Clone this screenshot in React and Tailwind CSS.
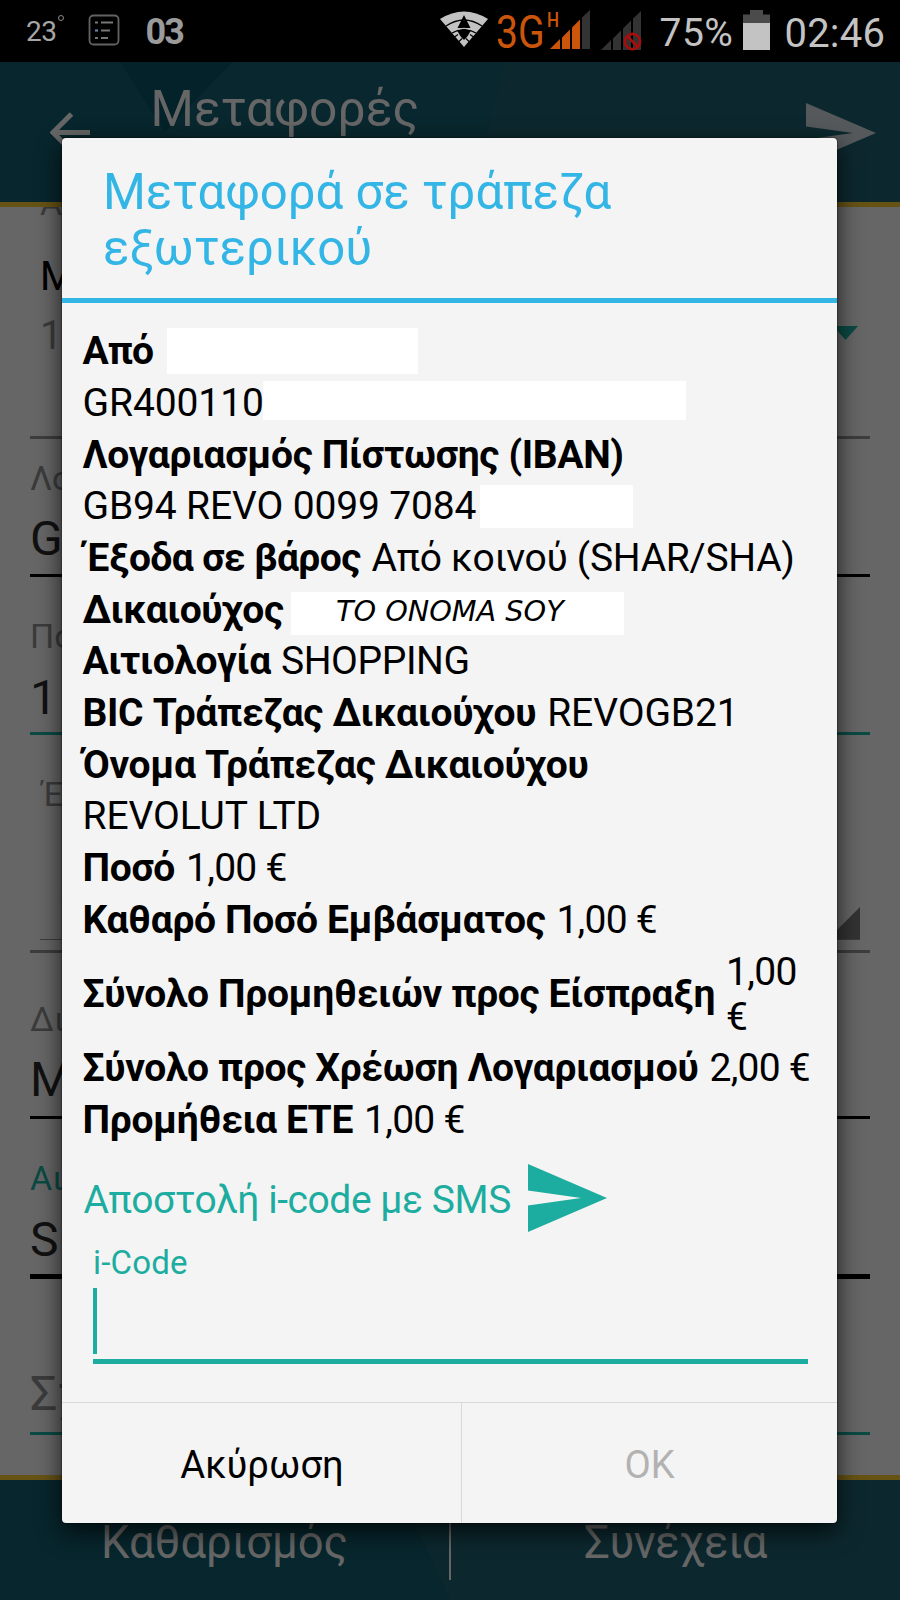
const WifiIcon = () => (
  <svg width="50" height="38" viewBox="0 0 50 38" className="ml-[439px]">
    <path d="M25 37 L1 9 Q25 -6 49 9 Z" fill="#c3c3c3" />
    <path d="M7 16 Q25 4 43 16 M13 23 Q25 16 37 23" fill="none" stroke="#000" strokeWidth="1.4" />
    <path d="M25 5 L31.5 18 H18.5 Z" fill="#000" />
    <path d="M18 20.5 Q25 18.5 32 20.5 L28 27 L25 30 L22 27 Z" fill="#000" />
    <path d="M17 19.5 Q25 17 33 19.5" fill="none" stroke="#c3c3c3" strokeWidth="1" />
    <path d="M14 28 L19 24.5 M18.5 33 L23 28.5 M36 28 L31 24.5 M31.5 33 L27 28.5" stroke="#000" strokeWidth="1.2" />
  </svg>
);

const SignalBars = ({ active, blocked }) => (
  <svg width="41" height="41" viewBox="0 0 41 41">
    <path d="M0 39 L10 29 V39 Z" fill={active ? '#cb560b' : '#333'} />
    <path d="M12 39 V27.5 L20 19.5 V39 Z" fill={active ? '#cb560b' : '#333'} />
    <path d="M22 39 V17.5 L30 9.5 V39 Z" fill={active ? '#cb560b' : '#333'} />
    <path d="M32 39 V7.5 L40 0 V39 Z" fill="#333" />
    {blocked && (
      <g fill="none" stroke="#a80c0c" strokeWidth="2.6">
        <circle cx="31.5" cy="30.5" r="7.6" />
        <path d="M26 25 L37 36" />
      </g>
    )}
  </svg>
);

const SendIcon = ({ className }) => (
  <svg viewBox="0 0 79 68" preserveAspectRatio="none" className={className} fill="currentColor">
    <path d="M0 0 L79 34 L0 68 V41.5 L53 34 L0 26.5 Z" />
  </svg>
);

const StatusBar = () => (
  <div className="flex h-[62px] shrink-0 items-start bg-black text-[#c3c3c3]">
    <div className="flex w-0 items-start whitespace-nowrap text-[#a6a6a6]">
      <span className="ml-[26px] mt-[18px] text-[28px] leading-none tracking-[-0.5px]">23</span>
      <span className="ml-[2px] mt-[15px] h-[6px] w-[6px] shrink-0 rounded-full border border-[#8a8a8a]" />
      <svg width="32" height="32" viewBox="0 0 32 32" className="ml-[24px] mt-[14px] shrink-0" fill="none">
        <rect x="1.5" y="1.5" width="29" height="29" rx="4" stroke="#626262" strokeWidth="1.8" />
        <path d="M7 8.5 h3 M13 8.5 h12 M13 16.5 h9 M7 24 h3 M13 24 h7" stroke="#777" strokeWidth="2.2" />
        <path d="M7 16.5 h3" stroke="#6a7fa8" strokeWidth="2.2" />
      </svg>
      <span className="ml-[25px] mt-[14px] text-[36px] font-bold leading-none tracking-[-1.8px] text-[#9b9b9b]">03</span>
    </div>
    <div className="flex shrink-0 items-start pt-[10px]">
      <WifiIcon />
      <div className="w-[52px] pl-[7px] text-[#cb560b]">
        <div className="mt-[-1px] w-max origin-left scale-x-[0.85] text-[46px] leading-none">3G</div>
      </div>
      <div className="w-[9px] text-[#cb560b]">
        <div className="ml-[6px] w-max origin-left scale-x-[0.85] text-[20px] font-medium leading-none">H</div>
      </div>
      <SignalBars active />
      <div className="ml-[10px] mt-px"><SignalBars blocked /></div>
      <div className="ml-[17.5px] mt-[4px] w-[82px] text-[39px] leading-none tracking-[0.5px]">75%</div>
      <svg width="27" height="40" viewBox="0 0 27 40" className="ml-px">
        <path d="M0 4.5 H7 V0 H20 V4.5 H27 V13 H0 Z" fill="#4b4b4b" />
        <rect y="13" width="27" height="27" fill="#c3c3c3" />
      </svg>
      <div className="ml-[15px] mt-[4px] text-[40px] leading-none tracking-[0.2px]">02:46</div>
    </div>
  </div>
);

const Header = () => (
  <div className="relative flex h-[145px] shrink-0 items-start border-b-[5px] border-[#665314] bg-[#07262d] text-[#666]">
    <svg className="absolute inset-0 h-[140px] w-full" viewBox="0 0 900 140">
      <path d="M120 0 H232 L165 70 Z" fill="#042229" />
      <path d="M232 0 H900 V140 H400 L165 70 Z" fill="#09272e" />
      <path d="M505 0 H900 V140 H470 Z" fill="#0c282e" />
    </svg>
    <svg width="41" height="42" viewBox="0 0 41 42" className="relative ml-[50px] mt-[50px]" fill="none" stroke="#666" strokeWidth="5">
      <path d="M40 20.5 H3 M21.5 2 L3 20.5 L21.5 39" />
    </svg>
    <div className="relative ml-[59.5px] mt-[23px] w-[653.5px] text-[49.7px] leading-none">Μεταφορές</div>
    <SendIcon className="relative ml-[2px] mt-[41px] h-[60px] w-[70px] shrink-0 text-[#55595b]" />
  </div>
);

// Transfer form that stays dimmed under the dialog
const TransferForm = () => (
  <div className="flex h-[1268px] shrink-0 flex-col overflow-hidden bg-[#666] px-[30px] text-[34px] leading-none text-[#3b3b3b]">
    <div className="h-[232px] shrink-0 border-b-[3px] border-[#3d3d3d] pl-[10px]">
      <div className="-mt-[21px]">Α</div>
      <div className="mt-[37px] text-[40px] text-black">Μ</div>
      <div className="mt-[19px] flex items-start justify-between text-[40px]">
        <span>1</span>
        <svg width="25" height="14" viewBox="0 0 25 14" className="mr-[12px] mt-[10px]" fill="#0b4a44">
          <path d="M0 0 H25 L12.5 14 Z" />
        </svg>
      </div>
    </div>
    <div className="h-[138px] shrink-0 border-b-[3px] border-black pt-[22px]">
      <div>Λο</div>
      <div className="mt-[20px] text-[48px] text-[#111]">G</div>
    </div>
    <div className="h-[158px] shrink-0 border-b-[3px] border-[#0b4a44] pt-[42px]">
      <div>Πο</div>
      <div className="mt-[21px] text-[48px] text-[#111]">1</div>
    </div>
    <div className="h-[218px] shrink-0 border-b-[3px] border-[#3d3d3d] pt-[42px] pl-[10px] pr-[10px]">
      <div className="pl-[2px]">Έ</div>
      <div className="mt-[54px] flex h-[75px] items-end justify-between border-b border-[#3d3d3d]">
        <span className="mb-[35px] ml-[21px] text-[40px] text-[#111]">Α</span>
        <svg width="32" height="32" viewBox="0 0 32 32" fill="#333"><path d="M32 0 V32 H0 Z" /></svg>
      </div>
    </div>
    <div className="h-[166px] shrink-0 border-b-[3px] border-black pt-[49px]">
      <div>Δι</div>
      <div className="mt-[20px] text-[48px] text-[#111]">Μ</div>
    </div>
    <div className="h-[160px] shrink-0 border-b-[5px] border-black pt-[42px]">
      <div className="text-[#0b4a44]">Αι</div>
      <div className="mt-[21px] text-[48px] text-[#111]">S</div>
    </div>
    <div className="h-[156px] shrink-0 border-b-[3px] border-[#0b4a44] pt-[91px] text-[48px]">Σχ</div>
  </div>
);

const Footer = () => (
  <div className="relative flex h-[125px] shrink-0 items-start border-t-[5px] border-[#665314] bg-[#07262d] text-center text-[45.4px] leading-none text-[#666]">
    <svg className="absolute inset-0 h-[120px] w-full" viewBox="0 0 900 120">
      <path d="M395 0 H900 V120 H450 Z" fill="#0c282e" />
    </svg>
    <div className="relative mt-[40px] flex-1">Καθαρισμός</div>
    <div className="relative h-[100px] w-[2px] bg-[#666]" />
    <div className="relative mt-[40px] flex-1 tracking-[-0.5px]">Συνέχεια</div>
  </div>
);

const Row = ({ label, children }) => (
  <div className="flex items-center gap-[11px]">
    {label && <b className="shrink-0 whitespace-nowrap font-bold tracking-[-0.34px]">{label}</b>}
    {children}
  </div>
);

const Value = ({ children }) => <span className="whitespace-nowrap font-[370] tracking-[-0.1px]">{children}</span>;

const Amount = ({ children }) => <span className="whitespace-nowrap font-[370] tracking-[-0.75px]">{children}</span>;

const TransferDialog = () => (
  <div className="flex h-[1385px] w-[775px] flex-col rounded-[4px] bg-[#f4f4f4] text-black shadow-[0_8px_24px_rgba(0,0,0,0.75),0_0_2px_rgba(0,0,0,0.8)]">
    <h1 className="h-[165px] shrink-0 border-b-[5px] border-[#33b5e5] pl-[41px] pt-[26px] text-[49.1px] leading-[56px] text-[#33b5e5]">
      Μεταφορά σε τράπεζα<br />εξωτερικού
    </h1>

    <div className="mt-[26.3px] flex flex-col gap-[6.7px] pl-[20.5px] text-[39px] leading-[45px]">
      <div className="flex h-[45px]">
        <b className="w-[84.5px] font-bold tracking-[-0.9px]">Από</b>
        <span className="-mt-[1px] h-[46px] w-[251px] shrink-0 bg-white" />
      </div>
      <div className="flex h-[45px]">
        <span className="w-[180.5px] font-[370] tracking-[-0.1px]">GR400110</span>
        <span className="h-[39px] w-[423px] bg-white" />
      </div>
      <Row label="Λογαριασμός Πίστωσης (IBAN)" />
      <div className="flex h-[45px]">
        <span className="w-[397.5px] whitespace-nowrap font-[370] tracking-[-0.15px]">GB94 REVO 0099 7084</span>
        <span className="mt-[1px] h-[43px] w-[153px] bg-white" />
      </div>
      <div className="flex items-center gap-[11px] pl-[3px]">
        <b className="shrink-0 whitespace-nowrap font-bold tracking-[-0.6px]">Έξοδα σε βάρος</b>
        <span className="whitespace-nowrap font-[370] tracking-[-0.28px]">Από κοινού (SHAR/SHA)</span>
      </div>
      <div className="flex h-[45px]">
        <b className="w-[208.5px] font-bold tracking-[-0.5px]">Δικαιούχος</b>
        <span className="mt-[4px] h-[43px] w-[333px] bg-white pl-[45px] font-['DejaVu_Sans',sans-serif] text-[28.7px] italic leading-[39px]">
          TO ONOMA SOY
        </span>
      </div>
      <Row label="Αιτιολογία">
        <span className="-ml-px font-[370] tracking-[-0.4px]">SHOPPING</span>
      </Row>
      <Row label="BIC Τράπεζας Δικαιούχου"><Value>REVOGB21</Value></Row>
      <Row label="Όνομα Τράπεζας Δικαιούχου" />
      <Row><Value>REVOLUT LTD</Value></Row>
      <Row label="Ποσό"><Amount>1,00 €</Amount></Row>
      <Row label="Καθαρό Ποσό Εμβάσματος"><Amount>1,00 €</Amount></Row>
      <Row label="Σύνολο Προμηθειών προς Είσπραξη">
        <span className="w-[80px] font-[370] tracking-[-0.7px]">1,00 €</span>
      </Row>
      <Row label="Σύνολο προς Χρέωση Λογαριασμού"><Amount>2,00 €</Amount></Row>
      <Row label="Προμήθεια ΕΤΕ"><Amount>1,00 €</Amount></Row>
    </div>

    <div className="ml-[21.5px] mt-[21px] flex h-[68px] items-center text-[39px] text-[#1dada0]">
      <span className="w-[444.5px] whitespace-nowrap pt-[5px] leading-none tracking-[-0.45px]">Αποστολή i-code με SMS</span>
      <SendIcon className="h-[68px] w-[79px]" />
    </div>

    <div className="ml-[31px] mt-[14px] flex w-[715px] flex-col border-b-[5px] border-[#1dada0] text-[#1dada0]">
      <label className="text-[33px] leading-none tracking-[0.2px]">i-Code</label>
      <span className="mb-[5px] mt-[9px] h-[66px] w-[4px] bg-[#1dada0]" />
    </div>

    <div className="mt-auto flex h-[121px] border-t border-[#d8d8d8] text-center text-[38.2px] leading-[120px]">
      <button className="w-[400px] border-r border-[#d8d8d8] pl-px pt-[2px]">Ακύρωση</button>
      <button className="flex-1 pt-[2px] text-[#b2b2b2]" disabled>OK</button>
    </div>
  </div>
);

export default function App() {
  return (
    <div className="relative flex h-[1600px] w-[900px] flex-col overflow-hidden bg-[#666] font-['Roboto',sans-serif]">
      <StatusBar />
      <Header />
      <TransferForm />
      <Footer />
      <div className="absolute left-0 right-px top-[138px] flex justify-center">
        <TransferDialog />
      </div>
    </div>
  );
}
